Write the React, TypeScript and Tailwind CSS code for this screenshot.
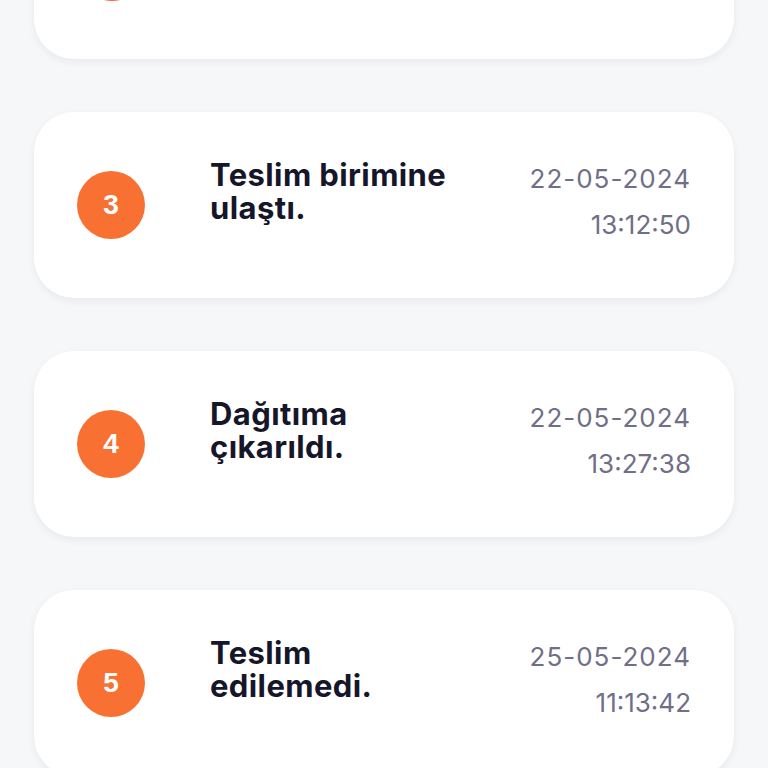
import React from "react"

type Step = {
  no: number
  lines: string[]
  date: string
  time: string
}

const steps: Step[] = [
  { no: 3, lines: ["Teslim birimine", "ulaştı."], date: "22-05-2024", time: "13:12:50" },
  { no: 4, lines: ["Dağıtıma", "çıkarıldı."], date: "22-05-2024", time: "13:27:38" },
  { no: 5, lines: ["Teslim", "edilemedi."], date: "25-05-2024", time: "11:13:42" },
]

function StepCard({ step }: { step: Step }) {
  return (
    <div className="flex h-[186px] shrink-0 items-center rounded-[40px] bg-white px-[43px] shadow-[0_3px_8px_rgba(20,20,40,0.06)]">
      <div className="flex h-[68px] w-[68px] shrink-0 items-center justify-center rounded-full bg-[#f87132] font-['Liberation_Sans',sans-serif] text-[28px] font-bold text-white">
        {step.no}
      </div>
      <div className="ml-[65px] self-start pt-[46px] font-['Inter',sans-serif] text-[31px] leading-[33px] font-bold tracking-[0.4px] text-[#16162b]">
        {step.lines.map((l) => (
          <div key={l}>{l}</div>
        ))}
      </div>
      <div className="ml-auto self-start pt-[44px] text-right font-['Inter',sans-serif] text-[26px] leading-[46px] text-[#6f6f88]">
        <div className="tracking-[1px]">{step.date}</div>
        <div>{step.time}</div>
      </div>
    </div>
  )
}

export default function App() {
  return (
    <div className="h-[768px] overflow-hidden bg-[#f6f7f9]">
      <div className="mt-[-127px] flex flex-col gap-[53px] px-[34px]">
        {/* previous step, scrolled mostly out of view */}
        <div className="flex h-[186px] shrink-0 items-center rounded-[40px] bg-white px-[43px] shadow-[0_3px_8px_rgba(20,20,40,0.06)]">
          <div className="h-[70px] w-[70px] shrink-0 rounded-full bg-[#f87132]" />
        </div>
        {steps.map((s) => (
          <StepCard key={s.no} step={s} />
        ))}
      </div>
    </div>
  )
}
